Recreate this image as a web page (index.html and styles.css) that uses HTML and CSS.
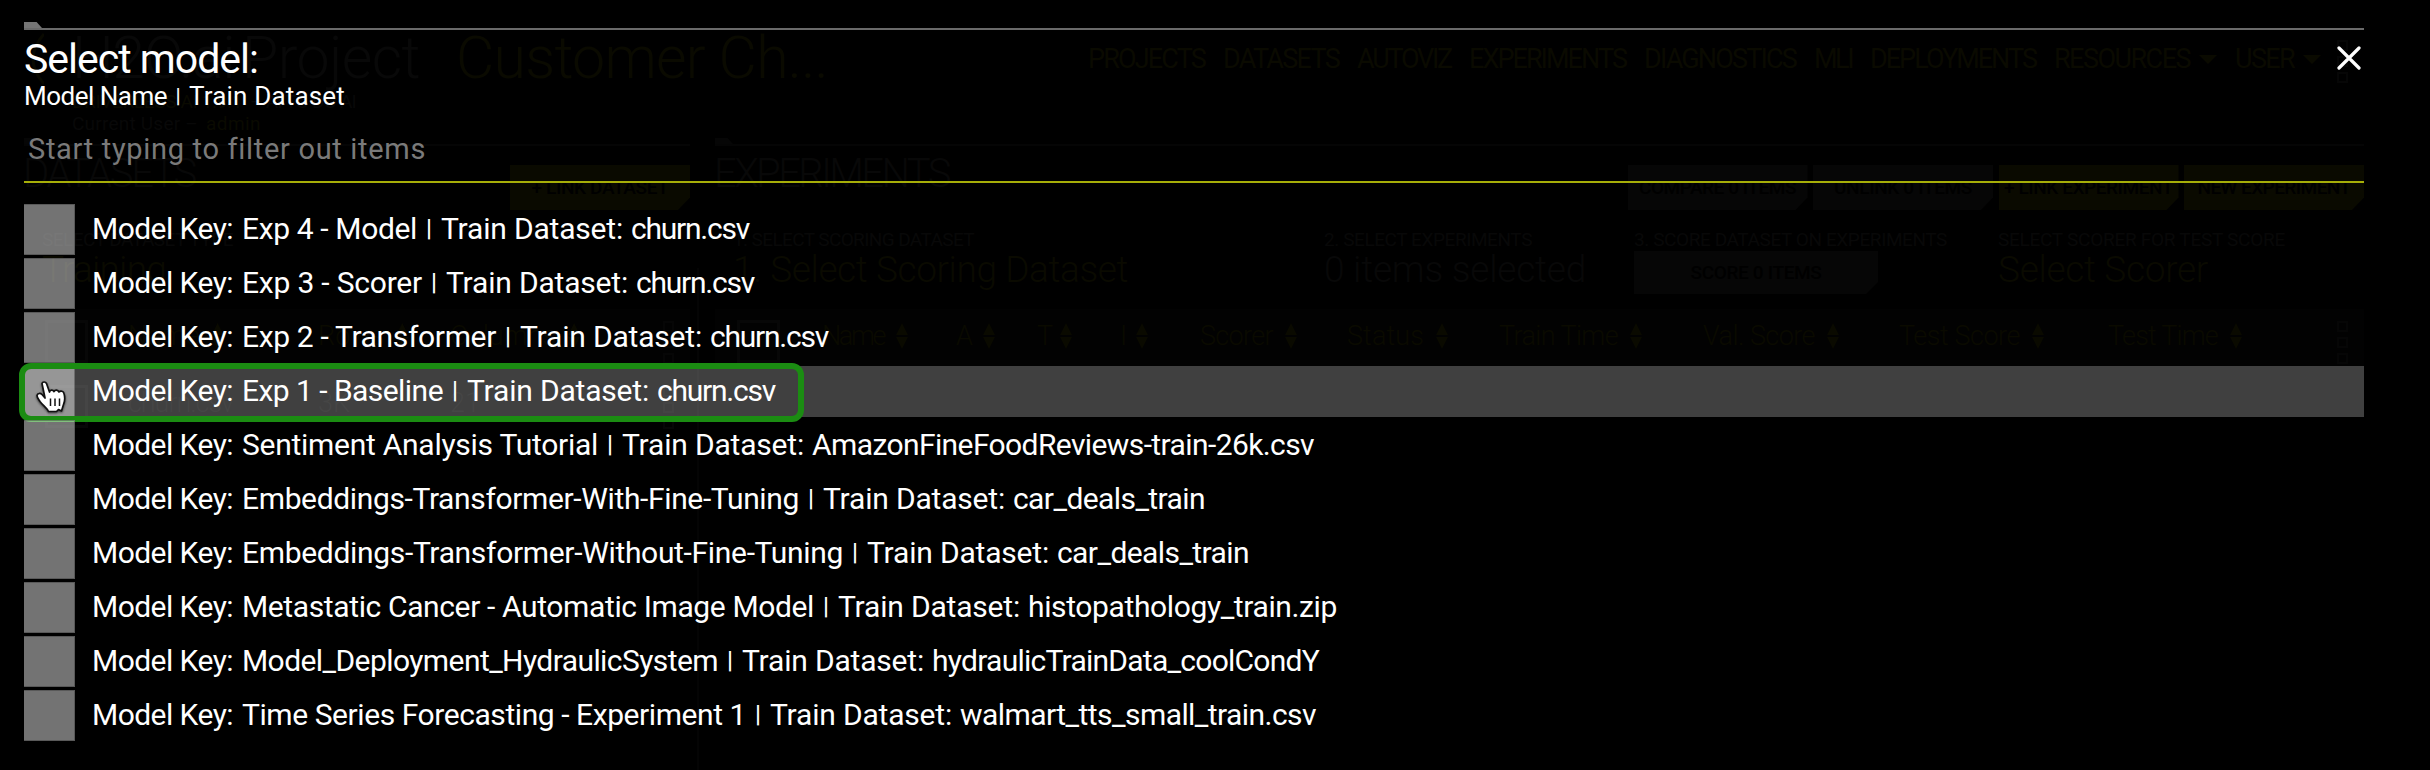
FILE: index.html
```html
<!DOCTYPE html>
<html lang="en">
<head>
<meta charset="utf-8">
<title>Select model</title>
<link rel="stylesheet" href="styles.css">
</head>
<body>
<div class="page">
  <header class="header">
    <svg class="logo" width="14" height="52" viewBox="0 0 14 52"><path d="M14 1Q-8 26 14 51" fill="none" stroke="#090900" stroke-width="3"/></svg>
    <div class="brand">
      <div class="brand-title"><span class="fit" data-w="162">H2O.ai</span><span class="fit" data-w="178">Project</span><span class="fit lime" data-w="372">Customer Ch...</span></div>
      <div class="brand-sub"><span class="fit lime" data-w="170">DRIVERLESS AI 1.9.1</span><span class="fit" data-w="106">– AI TO DO AI</span></div>
      <div class="brand-sub user"><span class="fit" data-w="126">Current User –</span><span class="fit lime" data-w="55">admin</span></div>
    </div>
    <nav class="nav">
      <span class="fit" data-w="117">PROJECTS</span><span class="fit" data-w="116">DATASETS</span><span class="fit" data-w="94">AUTOVIZ</span><span class="fit" data-w="157">EXPERIMENTS</span><span class="fit" data-w="152">DIAGNOSTICS</span><span class="fit" data-w="38">MLI</span><span class="fit" data-w="166">DEPLOYMENTS</span><span class="fit" data-w="136">RESOURCES</span><i class="caret"></i><span class="fit" data-w="59">USER</span><i class="caret"></i>
      <div class="dots"><i></i><i></i><i></i></div>
    </nav>
  </header>
  <main class="panels">
    <section class="panel left">
      <div class="tab dim"></div>
      <div class="panel-head"><h2 class="fit" data-w="172">DATASETS</h2><div class="btn lime-bg"><span class="fit" data-w="137">+ LINK DATASET</span></div></div>
      <div class="fields"><div class="field"><small class="fit" data-w="191">SELECT DATASET TYPE</small><b class="fit lime" data-w="124">Training</b></div></div>
      <div class="thead lgrid"><i class="check"></i><span class="th">Name<i class="sort"></i></span><span class="th">Rows<i class="sort"></i></span><span class="th">Columns<i class="sort"></i></span><div class="dots"><i></i><i></i><i></i></div></div>
      <div class="trow lgrid"><i class="check"></i><span class="fit" data-w="105">churn.csv</span><span>3K</span><span>21</span><div class="dots"><i></i><i></i><i></i></div></div>
    </section>
    <section class="panel right">
      <div class="tab dim"></div>
      <div class="panel-head"><h2 class="fit" data-w="235">EXPERIMENTS</h2><div class="btns"><div class="btn"><span class="fit" data-w="157">COMPARE 0 ITEMS</span></div><div class="btn"><span class="fit" data-w="138">UNLINK 0 ITEMS</span></div><div class="btn lime-bg"><span class="fit" data-w="169">+ LINK EXPERIMENT</span></div><div class="btn lime-bg"><span class="fit" data-w="153">NEW EXPERIMENT</span></div></div></div>
      <div class="fields rfields">
        <div class="field"><small class="fit" data-w="241">1. SELECT SCORING DATASET</small><b class="fit lime" data-w="395">1. Select Scoring Dataset</b></div>
        <div class="field"><small class="fit" data-w="208">2. SELECT EXPERIMENTS</small><b class="fit" data-w="262">0 items selected</b></div>
        <div class="field"><small class="fit" data-w="313">3. SCORE DATASET ON EXPERIMENTS</small><div class="btn score"><span class="fit" data-w="131">SCORE 0 ITEMS</span></div></div>
        <div class="field"><small class="fit" data-w="287">SELECT SCORER FOR TEST SCORE</small><b class="fit lime" data-w="210">Select Scorer</b></div>
      </div>
      <div class="thead rgrid"><i class="check"></i>
        <span class="th"><span class="fit" data-w="62">Name</span><i class="sort"></i></span>
        <span class="th"><span class="fit" data-w="15">A</span><i class="sort"></i></span>
        <span class="th"><span class="fit" data-w="11">T</span><i class="sort"></i></span>
        <span class="th"><span class="fit" data-w="4">I</span><i class="sort"></i></span>
        <span class="th"><span class="fit" data-w="73">Scorer</span><i class="sort"></i></span>
        <span class="th"><span class="fit" data-w="77">Status</span><i class="sort"></i></span>
        <span class="th"><span class="fit" data-w="119">Train Time</span><i class="sort"></i></span>
        <span class="th"><span class="fit" data-w="112">Val. Score</span><i class="sort"></i></span>
        <span class="th"><span class="fit" data-w="121">Test Score</span><i class="sort"></i></span>
        <span class="th"><span class="fit" data-w="110">Test Time</span><i class="sort"></i></span>
        <div class="dots"><i></i><i></i><i></i></div></div>
    </section>
  </main>
</div>

<div class="modal">
  <div class="tab"></div>
  <div class="modal-head">
    <div>
      <h1 class="fit" data-w="234">Select model:</h1>
      <p class="columns"><span class="fit" data-w="143">Model Name</span><span class="bar">|</span><span class="fit" data-w="156">Train Dataset</span></p>
    </div>
    <svg class="close" width="24" height="24" viewBox="0 0 24 24"><path d="M2 2L22 22M22 2L2 22" stroke="#fff" stroke-width="3.2" stroke-linecap="round"/></svg>
  </div>
  <div class="filter"><span class="fit" data-w="397">Start typing to filter out items</span></div>
  <ul class="list">
    <li class="item"><i class="box"></i><span class="fit key" data-w="141">Model Key:</span><span class="fit name" data-w="175">Exp 4 - Model</span><span class="bar">|</span><span class="fit set" data-w="182">Train Dataset:</span><span class="fit" data-w="118">churn.csv</span></li>
    <li class="item"><i class="box"></i><span class="fit key" data-w="141">Model Key:</span><span class="fit name" data-w="180">Exp 3 - Scorer</span><span class="bar">|</span><span class="fit set" data-w="182">Train Dataset:</span><span class="fit" data-w="118">churn.csv</span></li>
    <li class="item"><i class="box"></i><span class="fit key" data-w="141">Model Key:</span><span class="fit name" data-w="254">Exp 2 - Transformer</span><span class="bar">|</span><span class="fit set" data-w="182">Train Dataset:</span><span class="fit" data-w="118">churn.csv</span></li>
    <li class="item hover"><i class="box"></i><span class="fit key" data-w="141">Model Key:</span><span class="fit name" data-w="201">Exp 1 - Baseline</span><span class="bar">|</span><span class="fit set" data-w="182">Train Dataset:</span><span class="fit" data-w="118">churn.csv</span>
      <span class="focus"></span>
      <svg class="cursor" width="32" height="34" viewBox="0 0 32 34"><path d="M6 3.500C6.500 1.500 9.500 1.500 10.500 3.500L13.500 12C14 9.500 17 9.500 18 11.500C19 9.500 22 9.500 23 12C24.500 10.500 27.500 11 28 13.500C29 17 29 21 27.500 24.500L25.500 31L22.500 29.500L20.500 31.500L12.500 31.500C11 28 7 25.500 4 21.500C2.500 19 1 17.500 1 15.500C1.500 13 4.500 13 6 14.500L9 18Z" fill="#fff" stroke="#111" stroke-width="1.700" stroke-linejoin="round"/><path d="M14.500 18.500V26M19 18.500V26M23.500 18.500V26" stroke="#111" stroke-width="1.500"/></svg>
    </li>
    <li class="item"><i class="box"></i><span class="fit key" data-w="141">Model Key:</span><span class="fit name" data-w="356">Sentiment Analysis Tutorial</span><span class="bar">|</span><span class="fit set" data-w="182">Train Dataset:</span><span class="fit" data-w="502">AmazonFineFoodReviews-train-26k.csv</span></li>
    <li class="item"><i class="box"></i><span class="fit key" data-w="141">Model Key:</span><span class="fit name" data-w="557">Embeddings-Transformer-With-Fine-Tuning</span><span class="bar">|</span><span class="fit set" data-w="182">Train Dataset:</span><span class="fit" data-w="192">car_deals_train</span></li>
    <li class="item"><i class="box"></i><span class="fit key" data-w="141">Model Key:</span><span class="fit name" data-w="601">Embeddings-Transformer-Without-Fine-Tuning</span><span class="bar">|</span><span class="fit set" data-w="182">Train Dataset:</span><span class="fit" data-w="192">car_deals_train</span></li>
    <li class="item"><i class="box"></i><span class="fit key" data-w="141">Model Key:</span><span class="fit name" data-w="572">Metastatic Cancer - Automatic Image Model</span><span class="bar">|</span><span class="fit set" data-w="182">Train Dataset:</span><span class="fit" data-w="309">histopathology_train.zip</span></li>
    <li class="item"><i class="box"></i><span class="fit key" data-w="141">Model Key:</span><span class="fit name" data-w="476">Model_Deployment_HydraulicSystem</span><span class="bar">|</span><span class="fit set" data-w="182">Train Dataset:</span><span class="fit" data-w="387">hydraulicTrainData_coolCondY</span></li>
    <li class="item"><i class="box"></i><span class="fit key" data-w="141">Model Key:</span><span class="fit name" data-w="504">Time Series Forecasting - Experiment 1</span><span class="bar">|</span><span class="fit set" data-w="182">Train Dataset:</span><span class="fit" data-w="356">walmart_tts_small_train.csv</span></li>
  </ul>
</div>
<script src="fit.js"></script>
</body>
</html>
```
FILE: styles.css
```css
* { box-sizing: border-box; }
body { margin: 0; background: #000; color: #080808; font-family: Roboto, "Liberation Sans", sans-serif; height: 770px; overflow: hidden; position: relative; }
h1, h2, p, ul { margin: 0; padding: 0; font-weight: 400; list-style: none; }
i { font-style: normal; }
.fit { display: inline-block; white-space: nowrap; flex: none; }

/* Dimmed page behind the dialog */
.page { width: 2430px; height: 770px; display: flex; flex-direction: column; overflow: hidden; }
.lime { color: #0a0a00; }
.header { height: 138px; flex: none; padding: 28px 82px 0 30px; display: flex; }
.logo { margin: 5px 28px 0 0; flex: none; }
.brand { flex: 1; }
.brand-title { display: flex; font-size: 59px; line-height: 60px; font-weight: 300; white-space: nowrap; }
.brand-title span { margin-right: 8px; }
.brand-title span + span { margin-right: 36px; }
.brand-sub { display: flex; gap: 8px; font-size: 19px; line-height: 22px; margin-top: 3px; }
.brand-sub.user { margin-top: 0; }
.nav { display: flex; gap: 18px; margin-top: 11px; height: 40px; font-size: 27px; line-height: 40px; color: #0a0a00; align-items: center; }
.caret { border: 9px solid transparent; border-top: 9px solid #0a0a00; border-bottom: 0; margin-left: -9px; }
.dots { display: flex; flex-direction: column; gap: 5px; width: 11px; flex: none; }
.dots i { width: 11px; height: 11px; border: 2px solid #060606; }
.nav .dots { margin: 5px 0 0 -2px; }
.panels { display: flex; gap: 25px; padding: 0 66px 0 24px; flex: 1; }
.left { width: 666px; position: relative; }
.left::after { content: ""; position: absolute; right: -9px; top: 130px; bottom: 0; width: 2px; background: #040404; }
.right { flex: 1; }
.tab { height: 8px; border-bottom: 2px solid #6a6a6a; }
.tab::before { content: ""; display: block; width: 18px; height: 6px; background: #757575; clip-path: polygon(0 0, 70% 0, 100% 100%, 0 100%); }
.tab.dim { border-color: #050505; }
.tab.dim::before { background: #060606; }
.panel-head { height: 86px; display: flex; justify-content: space-between; padding-top: 19px; }
.panel-head h2 { font-size: 40px; line-height: 40px; font-weight: 300; margin-left: -1px; margin-top: -11px; }
.btns { display: flex; gap: 5.5px; }
.btn { width: 180px; height: 45px; background: #060606; color: #000; font-size: 19px; line-height: 45px; font-weight: 500; text-align: center; clip-path: polygon(0 0, 100% 0, 100% 72%, calc(100% - 12px) 100%, 0 100%); }
.btn .fit { text-align: left; }
.lime-bg { background: #0a0a00; }
.fields { height: 77px; padding-left: 18px; }
.rfields { display: grid; grid-template-columns: 591px 310px 364px 1fr; }
.field { display: flex; flex-direction: column; align-items: flex-start; }
.field small { font-size: 19px; line-height: 20px; height: 19px; margin-top: -2px; }
.field b { font-size: 37px; line-height: 42px; font-weight: 300; }
.btn.score { width: 244px; height: 43px; line-height: 43px; margin-top: 2px; }
.thead { height: 57px; background: #020202; color: #0a0a00; font-size: 27px; line-height: 52px; font-weight: 300; }
.trow { height: 75px; padding-top: 8px; font-size: 27px; line-height: 58px; font-weight: 300; color: #080808; }
.lgrid { display: grid; grid-template-columns: 83px 190px 132px 213px 11px; padding-left: 21px; }
.rgrid { display: grid; grid-template-columns: 85px 134px 81px 83px 80px 147px 152px 204px 196px 209px 229px 11px; padding-left: 22px; }
.check { width: 43px; height: 43px; border: 3px solid #070707; margin-top: 11px; }
.th { display: flex; height: 54px; align-items: center; gap: 12px; white-space: nowrap; }
.sort { width: 12px; height: 26px; background: #0a0a00; clip-path: polygon(50% 0, 100% 46%, 0 46%, 0 54%, 100% 54%, 50% 100%, 0 54%, 0 46%); }
.thead .dots, .trow .dots { padding-top: 12px; }

/* Dialog */
.modal { position: absolute; inset: 0; padding: 22px 66px 0 24px; color: #fff; }
.modal-head { display: flex; justify-content: space-between; padding-top: 7px; height: 99px; }
.modal h1 { font-size: 41px; line-height: 44px; display: block; }
.columns { display: flex; font-size: 26px; line-height: 30px; }
.columns .bar { width: 22px; }
.close { margin: 9px 3px 0 0; flex: none; }
.filter { height: 54px; border-bottom: 2px solid #a6ae08; padding-left: 4px; font-size: 29px; line-height: 40px; color: #7a7a7a; }
.list { padding-top: 21px; display: flex; flex-direction: column; gap: 3px; }
.item { height: 51px; display: flex; font-size: 30px; line-height: 49px; position: relative; }
.box { width: 51px; height: 51px; background: rgba(255, 255, 255, .45); border: 1px solid rgba(50, 50, 50, .4); border-left: 0; margin-right: 17px; flex: none; }
.key { margin-right: 9px; }
.set { margin-right: 8px; }
.bar { width: 24px; flex: none; text-align: center; font-size: .8em; font-weight: 500; position: relative; top: .02em; }
.hover { background: rgba(255, 255, 255, .25); }
.focus { position: absolute; left: -5px; top: -3px; width: 785px; height: 59px; border: 6px solid #1b8c12; border-radius: 12px; }
.cursor { position: absolute; left: 12px; top: 14px; filter: drop-shadow(0 1px 1px rgba(0, 0, 0, .6)); }
```
FILE: fit.js
```js
document.querySelectorAll('.fit').forEach(function (el) {
  var target = parseFloat(el.dataset.w);
  var natural = el.getBoundingClientRect().width;
  if (getComputedStyle(el).display === 'block') {
    var r = document.createRange();
    r.selectNodeContents(el);
    natural = r.getBoundingClientRect().width;
  }
  el.style.letterSpacing = (target - natural) / el.textContent.length + 'px';
  el.style.width = target + 'px';
});
```
